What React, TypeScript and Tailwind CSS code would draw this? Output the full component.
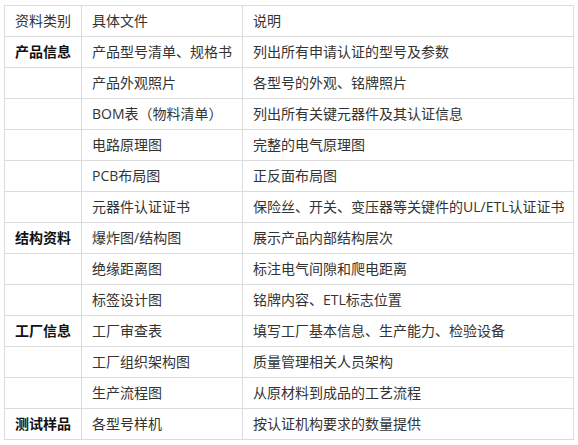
import React from "react";

const rows: [string, string, string][] = [
  ["产品信息", "产品型号清单、规格书", "列出所有申请认证的型号及参数"],
  ["", "产品外观照片", "各型号的外观、铭牌照片"],
  ["", "BOM表（物料清单）", "列出所有关键元器件及其认证信息"],
  ["", "电路原理图", "完整的电气原理图"],
  ["", "PCB布局图", "正反面布局图"],
  ["", "元器件认证证书", "保险丝、开关、变压器等关键件的UL/ETL认证证书"],
  ["结构资料", "爆炸图/结构图", "展示产品内部结构层次"],
  ["", "绝缘距离图", "标注电气间隙和爬电距离"],
  ["", "标签设计图", "铭牌内容、ETL标志位置"],
  ["工厂信息", "工厂审查表", "填写工厂基本信息、生产能力、检验设备"],
  ["", "工厂组织架构图", "质量管理相关人员架构"],
  ["", "生产流程图", "从原材料到成品的工艺流程"],
  ["测试样品", "各型号样机", "按认证机构要求的数量提供"],
];

export default function App() {
  return (
    <div
      className="w-[578px] h-[445px] bg-white pt-[5px] pl-[4px] text-[#333] text-[14px]"
      style={{ fontFamily: '"Open Sans", "Noto Sans CJK SC", sans-serif' }}
    >
      <table className="table-fixed border-collapse w-[569px]">
        <colgroup>
          <col className="w-[77px]" />
          <col className="w-[161px]" />
          <col className="w-[331px]" />
        </colgroup>
        <thead>
          <tr>
            <td className="h-[31px] border border-[#dcdcdc] px-[10px] py-0 leading-none">资料类别</td>
            <td className="h-[31px] border border-[#dcdcdc] px-[10px] py-0 leading-none">具体文件</td>
            <td className="h-[31px] border border-[#dcdcdc] px-[10px] py-0 leading-none">说明</td>
          </tr>
        </thead>
        <tbody>
          {rows.map((r, i) => (
            <tr key={i}>
              <td className="h-[31px] border border-[#dcdcdc] px-[10px] py-0 leading-none font-bold text-[#111] whitespace-nowrap">
                {r[0]}
              </td>
              <td className="h-[31px] border border-[#dcdcdc] px-[10px] py-0 leading-none whitespace-nowrap">
                {r[1]}
              </td>
              <td className="h-[31px] border border-[#dcdcdc] px-[10px] py-0 leading-none whitespace-nowrap">
                {r[2]}
              </td>
            </tr>
          ))}
        </tbody>
      </table>
    </div>
  );
}
